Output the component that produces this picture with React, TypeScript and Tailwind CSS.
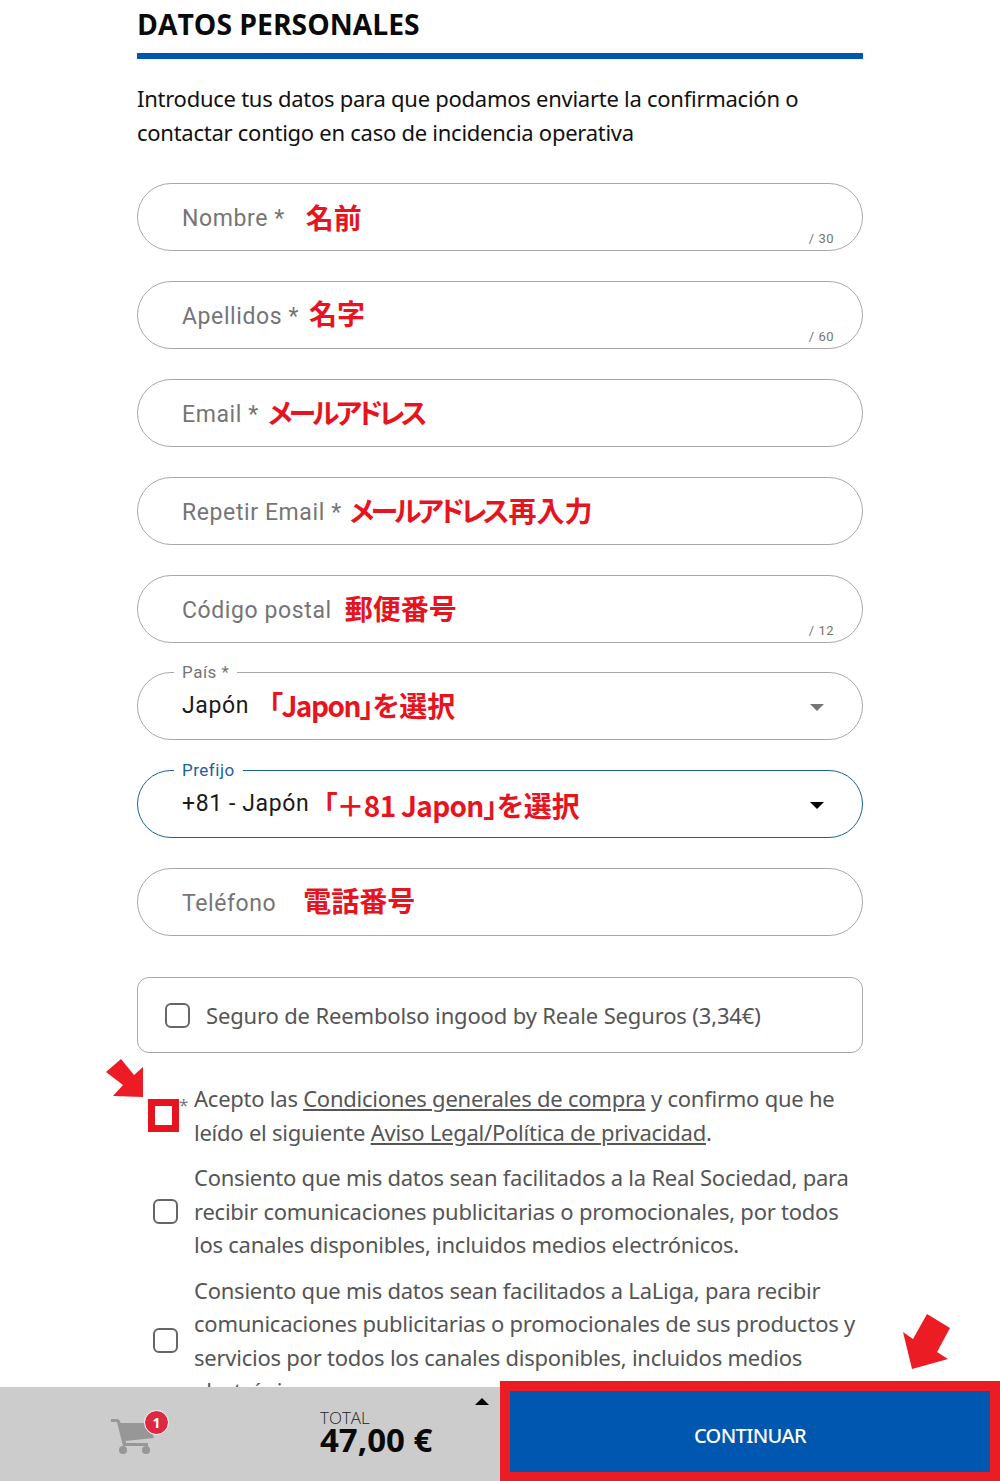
import React from 'react';

const red = "font-['Noto_Sans_CJK_JP',sans-serif] [font-feature-settings:'palt'] font-bold text-[#e5141f] text-[28px] leading-none whitespace-nowrap";

interface FieldProps {
  label: string;
  note: React.ReactNode;
  noteGap: string;
  counter?: string;
}

const Field: React.FC<FieldProps> = ({ label, note, noteGap, counter }) => (
  <div className="relative flex h-[68px] items-center rounded-[34px] border border-[#a8a8a8] pl-[44px]">
    <span className="mt-[5px] font-['Roboto',sans-serif] text-[23px] tracking-[0.6px] text-[#757575] whitespace-nowrap">{label}</span>
    <span className={`${red} ${noteGap}`}>{note}</span>
    {counter && (
      <span className="absolute right-[28px] bottom-[3px] font-['Roboto',sans-serif] text-[13px] leading-4 tracking-[0.5px] text-[#757575]">
        {counter}
      </span>
    )}
  </div>
);

interface SelectProps {
  label: string;
  value: string;
  active?: boolean;
  children: React.ReactNode;
}

const SelectField: React.FC<SelectProps> = ({ label, value, active, children }) => (
  <div className={`relative flex h-[68px] items-center rounded-[34px] border pl-[44px] ${active ? 'border-[#1d5f9e]' : 'border-[#a8a8a8]'}`}>
    <span className={`absolute left-[36px] top-[-10px] bg-white px-[8px] font-['Roboto',sans-serif] text-[17px] leading-[18px] tracking-[0.5px] ${active ? 'text-[#1d5f9e]' : 'text-[#757575]'}`}>
      {label}
    </span>
    <span className="font-['Roboto',sans-serif] text-[23px] tracking-[0.6px] text-[#1a1a1a] whitespace-nowrap">{value}</span>
    {children}
    <span className={`absolute right-[38px] top-[31px] h-0 w-0 border-x-[7px] border-t-[7px] border-x-transparent ${active ? 'border-t-black' : 'border-t-[#757575]'}`} />
  </div>
);

const CheckBox = () => (
  <span className="block h-[25px] w-[25px] shrink-0 rounded-[6px] border-2 border-[#666] bg-white" />
);

const App: React.FC = () => {
  return (
    <div className="relative h-[1481px] w-[1000px] overflow-hidden bg-white font-['Noto_Sans',sans-serif]">
      <div className="mx-[137px] pt-[6px]">
        <h2 className="font-['Open_Sans',sans-serif] text-[28.3px] leading-[37px] font-bold text-[#0a0a0a]">DATOS PERSONALES</h2>
        <div className="mt-[10px] h-[6px] bg-[#0057b0]" />
        <p className="mt-[22px] text-[22px] leading-[34px] tracking-[-0.26px] text-[#111]">
          Introduce tus datos para que podamos enviarte la confirmación o<br />
          contactar contigo en caso de incidencia operativa
        </p>

        <div className="mt-[34px] flex flex-col gap-[29.9px]">
          <Field label="Nombre *" note="名前" noteGap="ml-[21px]" counter="/ 30" />
          <Field label="Apellidos *" note="名字" noteGap="ml-[10px] mb-[4px]" counter="/ 60" />
          <Field label="Email *" note={<span className="tracking-[-3.8px]">メールアドレス</span>} noteGap="ml-[9px] mb-[2px]" />
          <Field
            label="Repetir Email *"
            note={<><span className="tracking-[-3.8px]">メールアドレス</span><span className="ml-[3px]">再入力</span></>}
            noteGap="ml-[8px] mb-[2px]"
          />
          <Field label="Código postal" note="郵便番号" noteGap="ml-[13px] mb-[2px]" counter="/ 12" />
          <SelectField label="País *" value="Japón">
            <span className={`${red} ml-[20px] mb-[2px]`}><span className="font-semibold tracking-[-1.5px]">「Japon」</span>を選択</span>
          </SelectField>
          <SelectField label="Prefijo" value="+81 - Japón" active>
            <span className={`${red} ml-[14px] mt-[2px]`}><span className="tracking-[-0.7px]">「＋81 Japon」</span>を選択</span>
          </SelectField>
          <Field label="Teléfono" note="電話番号" noteGap="ml-[27px] mb-[4px]" />
        </div>

        <div className="mt-[41px] flex h-[76px] items-center gap-[16px] rounded-[12px] border border-[#a8a8a8] pl-[27px]">
          <CheckBox />
          <span className="text-[22px] tracking-[-0.15px] text-[#555]">Seguro de Reembolso ingood by Reale Seguros (3,34€)</span>
        </div>

        <div className="mt-[29px] flex flex-col gap-[12px] text-[22px] leading-[33.5px] tracking-[-0.24px] text-[#555]">
          <div className="flex items-center gap-[16px] pl-[16px]">
            <span className="h-[25px] w-[25px] shrink-0" />
            <p className="whitespace-nowrap">
              Acepto las <u>Condiciones generales de compra</u> y confirmo que he<br />
              leído el siguiente <u>Aviso Legal/Política de privacidad</u>.
            </p>
          </div>
          <div className="flex items-center gap-[16px] pl-[16px]">
            <CheckBox />
            <p className="whitespace-nowrap">
              Consiento que mis datos sean facilitados a la Real Sociedad, para<br />
              recibir comunicaciones publicitarias o promocionales, por todos<br />
              los canales disponibles, incluidos medios electrónicos.
            </p>
          </div>
          <div className="flex items-center gap-[16px] pl-[16px]">
            <CheckBox />
            <p className="whitespace-nowrap">
              Consiento que mis datos sean facilitados a LaLiga, para recibir<br />
              comunicaciones publicitarias o promocionales de sus productos y<br />
              servicios por todos los canales disponibles, incluidos medios<br />
              electrónicos.
            </p>
          </div>
        </div>
      </div>

      {/* required checkbox highlight and its arrow */}
      <span className="absolute left-[179px] top-[1095px] text-[17px] leading-5 text-[#777]">*</span>
      <span className="absolute left-[148px] top-[1099px] h-[33px] w-[31px] border-[7px] border-[#e5141f] bg-white" />
      <svg className="absolute left-0 top-0 pointer-events-none" width="1000" height="1481">
        <polygon points="121,1059 134,1075 143,1067 143,1097 113,1096 123,1085 106,1072" fill="#ec1c24" />
        <polygon points="927,1314 950,1328 937,1352 948,1359 912,1369 903,1332 913,1339" fill="#ec1c24" />
      </svg>

      {/* bottom bar */}
      <div className="absolute bottom-0 left-0 flex h-[94px] w-full bg-[#cccccc]">
        <div className="relative flex w-[320px] shrink-0 justify-start pl-[110px] pt-[30px]">
          <svg width="44" height="38" viewBox="0 0 44 38" className="block">
            <path d="M1 2h7l2 2 6 22h22v3H13L7 5H1z" fill="#979797" />
            <path d="M9 6h30l5 15-29 3z" fill="#979797" />
            <circle cx="13" cy="33" r="4" fill="#979797" />
            <circle cx="36" cy="33" r="4" fill="#979797" />
          </svg>
          <span className="absolute left-[144px] top-[23px] flex h-[25px] w-[25px] items-center justify-center rounded-full border border-white bg-[#dc2840] font-['Open_Sans',sans-serif] text-[14px] font-bold text-white">
            1
          </span>
        </div>
        <div className="relative flex-1 pt-[24px] font-['Open_Sans',sans-serif]">
          <div className="text-[17px] leading-[14px] font-light text-[#222]">TOTAL</div>
          <div className="text-[33px] leading-[30px] font-bold text-[#0a0a0a]">47,00 €</div>
          <span className="absolute left-[155px] top-[11px] h-0 w-0 border-x-[7px] border-b-[7px] border-x-transparent border-b-black" />
        </div>
        <button className="absolute bottom-0 left-[500px] flex h-[100px] w-[500px] items-center justify-center border-x-[10px] border-t-[10px] border-b-[9px] border-[#ec1c24] bg-[#0057b0] pt-[8px] font-['Noto_Sans',sans-serif] text-[20px] font-medium tracking-[-0.6px] text-white">
          CONTINUAR
        </button>
      </div>
    </div>
  );
};

export default App;
